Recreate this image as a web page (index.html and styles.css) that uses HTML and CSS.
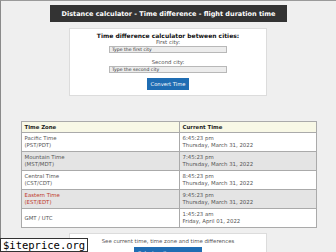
FILE: index.html
```html
<!doctype html>
<html lang="en">
    <head>
        <meta charset="UTF-8" />
        <title>Distance calculator - Time difference - flight duration time</title>
        <link rel="stylesheet" href="styles.css">
    </head>
    <body>
        <div class="page">
            <div class="header">Distance calculator - Time difference - flight duration time</div>

            <form class="box calc" onsubmit="return false">
                <div class="calc-title">Time difference calculator between cities:</div>
                <label class="field-label">First city:</label>
                <input class="city" type="text" placeholder="Type the first city" />
                <label class="field-label second">Second city:</label>
                <input class="city" type="text" placeholder="Type the second city" />
                <button class="btn" type="submit">Convert Time</button>
            </form>

            <table class="zones">
                <tr class="head">
                    <th class="zone-col">Time Zone</th>
                    <th>Current Time</th>
                </tr>
                <tr>
                    <td>Pacific Time<br />(PST/PDT)</td>
                    <td>6:45:23 pm<br />Thursday, March 31, 2022</td>
                </tr>
                <tr class="alt">
                    <td>Mountain Time<br />(MST/MDT)</td>
                    <td>7:45:23 pm<br />Thursday, March 31, 2022</td>
                </tr>
                <tr>
                    <td>Central Time<br />(CST/CDT)</td>
                    <td>8:45:23 pm<br />Thursday, March 31, 2022</td>
                </tr>
                <tr class="alt local">
                    <td>Eastern Time<br />(EST/EDT)</td>
                    <td>9:45:23 pm<br />Thursday, March 31, 2022</td>
                </tr>
                <tr>
                    <td>GMT / UTC</td>
                    <td>1:45:23 am<br />Friday, April 01, 2022</td>
                </tr>
            </table>

            <div class="box more">
                <div class="more-text">See current time, time zone and time differences</div>
                <button class="btn wide" type="button">Select a city</button>
            </div>
        </div>
        <div class="stamp">$iteprice.org</div>
    </body>
</html>
```

FILE: styles.css
```css
* {
    box-sizing: border-box;
}
html,
body {
    height: 100%;
    overflow: hidden;
}
body {
    margin: 0;
    background-color: #efefef;
    border-top: 1px solid #9a9a9a;
    border-left: 1px solid #8a8a8a;
    font-family: "DejaVu Sans", Verdana, sans-serif;
    font-size: 5.4px;
    color: #555;
}
.page {
    display: flex;
    flex-direction: column;
    align-items: center;
    padding-top: 4px;
}
.header {
    width: 237px;
    height: 17px;
    background-color: #333;
    color: #fff;
    font-weight: bold;
    font-size: 6.5px;
    display: flex;
    align-items: center;
    justify-content: center;
}
.box {
    width: 198px;
    background-color: #fff;
    border: 1px solid #dcdcdc;
    display: flex;
    flex-direction: column;
    align-items: center;
}
.calc {
    margin: 6px 0 0 -1px;
    padding: 3px 0 5px;
}
.calc-title {
    color: #111;
    font-weight: bold;
    font-size: 6px;
    line-height: 7px;
}
.field-label {
    line-height: 7px;
}
.field-label.second {
    margin-top: 6px;
}
.city {
    width: 118px;
    height: 7px;
    margin: 0;
    padding: 0 2px;
    border: 1px solid #b8b8b8;
    background-color: #ececec;
    font-family: inherit;
    font-size: 4.6px;
}
.city::placeholder {
    color: #333;
}
.btn {
    margin-top: 5px;
    height: 12px;
    padding: 0 4px;
    border: none;
    background-color: #1f6db3;
    color: #fff;
    font-family: inherit;
    font-size: 5.2px;
}
.zones {
    width: 296px;
    margin-top: 25px;
    border-collapse: collapse;
    border: 1px solid #9a9a9a;
    background-color: #fff;
    line-height: 7px;
}
.zones th,
.zones td {
    border: 1px solid #aaa;
    text-align: left;
    padding: 2px 3px;
    vertical-align: middle;
}
.zones th {
    color: #222;
    padding: 2px 3px;
    line-height: 6px;
}
.zones .zone-col {
    width: 158px;
}
.zones .head {
    background-color: #f8f8e6;
}
.zones .alt {
    background-color: #e4e4e4;
}
.zones .local td:first-child {
    color: #c0392b;
}
.more {
    margin: 5px 0 0 -1px;
    padding: 4px 0 0;
    height: 30px;
}
.more-text {
    line-height: 7px;
}
.btn.wide {
    margin-top: 2px;
    width: 68px;
    text-align: left;
    padding-left: 4px;
    align-items: flex-start;
}
.stamp {
    position: absolute;
    left: 0;
    bottom: 0;
    padding: 0 2px;
    background-color: #fff;
    border: 1px solid #333;
    color: #000;
    font-family: "DejaVu Sans Mono", monospace;
    font-size: 10.5px;
    line-height: 12px;
}
```
